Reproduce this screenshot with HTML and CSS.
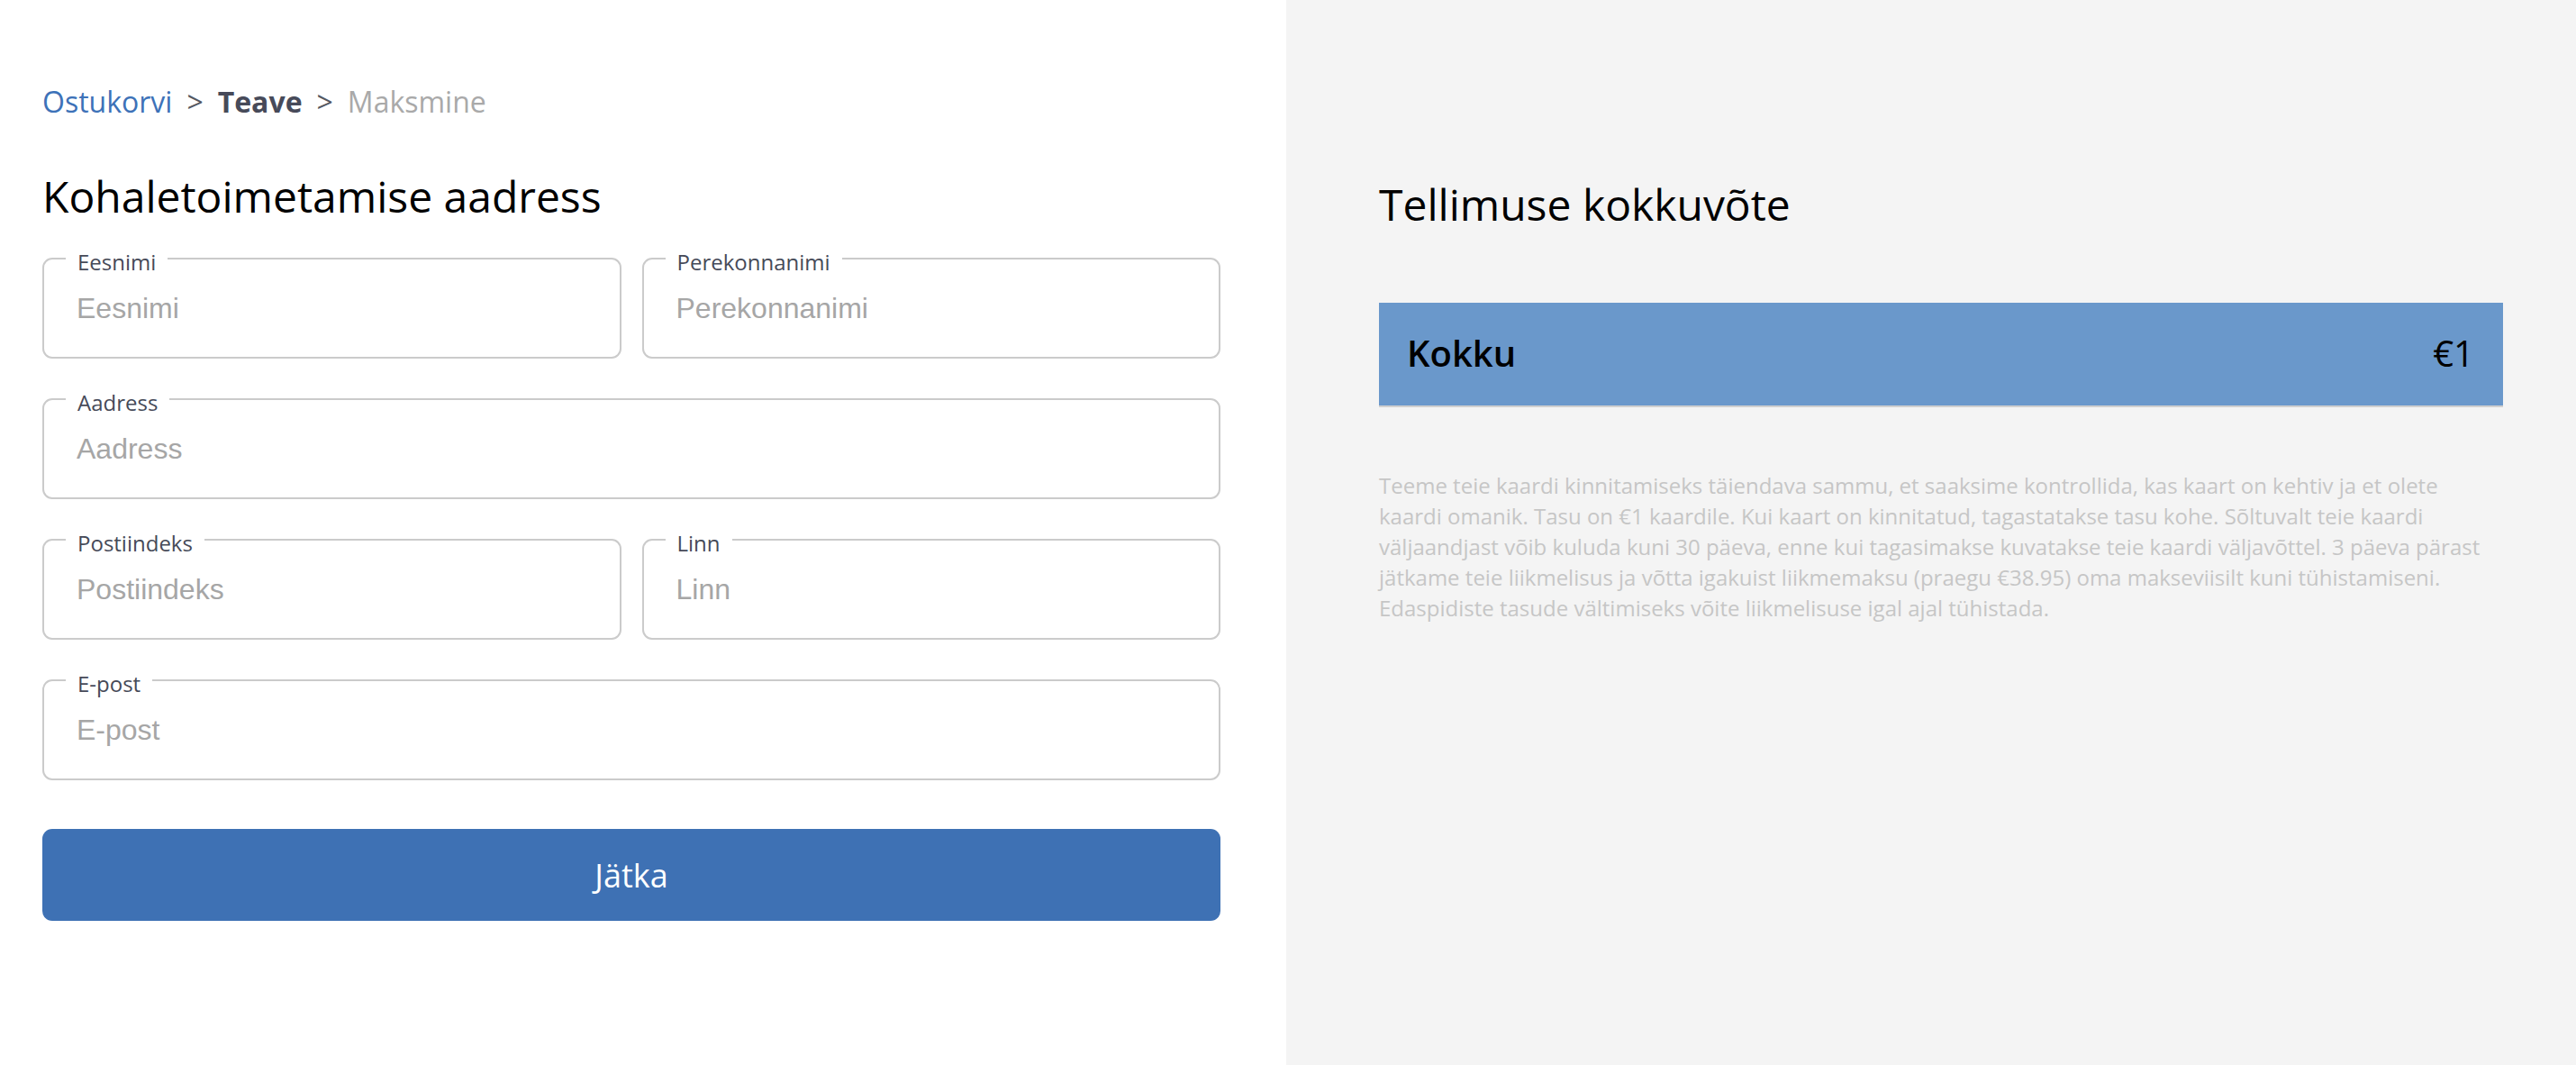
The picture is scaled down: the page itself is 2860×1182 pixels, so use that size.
FILE: index.html
```html
<!DOCTYPE html>
<html lang="et">
<head>
<meta charset="utf-8">
<title>Teave</title>
<link rel="stylesheet" href="styles.css">
</head>
<body>
<div class="page">
  <main class="checkout">
    <nav class="crumbs">
      <span class="crumb crumb-link">Ostukorvi</span>
      <span class="crumb-sep">&gt;</span>
      <span class="crumb crumb-current">Teave</span>
      <span class="crumb-sep">&gt;</span>
      <span class="crumb crumb-next">Maksmine</span>
    </nav>
    <h1 class="section-title">Kohaletoimetamise aadress</h1>
    <form class="address-form">
      <div class="row row-2">
        <div class="field">
          <label class="field-label">Eesnimi</label>
          <input class="field-input" type="text" placeholder="Eesnimi">
        </div>
        <div class="field">
          <label class="field-label">Perekonnanimi</label>
          <input class="field-input" type="text" placeholder="Perekonnanimi">
        </div>
      </div>
      <div class="row">
        <div class="field">
          <label class="field-label">Aadress</label>
          <input class="field-input" type="text" placeholder="Aadress">
        </div>
      </div>
      <div class="row row-2">
        <div class="field">
          <label class="field-label">Postiindeks</label>
          <input class="field-input" type="text" placeholder="Postiindeks">
        </div>
        <div class="field">
          <label class="field-label">Linn</label>
          <input class="field-input" type="text" placeholder="Linn">
        </div>
      </div>
      <div class="row">
        <div class="field">
          <label class="field-label">E-post</label>
          <input class="field-input" type="text" placeholder="E-post">
        </div>
      </div>
      <button class="continue-btn" type="button">Jätka</button>
    </form>
  </main>
  <aside class="summary">
    <h2 class="summary-title">Tellimuse kokkuvõte</h2>
    <div class="total-bar">
      <span class="total-label">Kokku</span>
      <span class="total-value">€1</span>
    </div>
    <p class="summary-note">Teeme teie kaardi kinnitamiseks täiendava sammu, et saaksime kontrollida, kas kaart on kehtiv ja et olete kaardi omanik. Tasu on €1 kaardile. Kui kaart on kinnitatud, tagastatakse tasu kohe. Sõltuvalt teie kaardi väljaandjast võib kuluda kuni 30 päeva, enne kui tagasimakse kuvatakse teie kaardi väljavõttel. 3 päeva pärast jätkame teie liikmelisus ja võtta igakuist liikmemaksu (praegu €38.95) oma makseviisilt kuni tühistamiseni. Edaspidiste tasude vältimiseks võite liikmelisuse igal ajal tühistada.</p>
  </aside>
</div>
</body>
</html>
```

FILE: styles.css
```css
* {
  box-sizing: border-box;
}

html, body {
  margin: 0;
  padding: 0;
  height: 100%;
}

body {
  font-family: "Open Sans", "Noto Sans", sans-serif;
  background: #ffffff;
  color: #000;
}

.page {
  display: flex;
  min-height: 1182px;
}

.checkout {
  width: 1428px;
  flex: none;
  background: #ffffff;
  padding: 91px 73px 0 47px;
}

.crumbs {
  display: flex;
  align-items: baseline;
  gap: 16px;
  font-size: 32px;
  line-height: 44px;
  height: 44px;
}

.crumb-link {
  color: #3d72b8;
}

.crumb-sep {
  color: #555861;
}

.crumb-current {
  color: #474a59;
  font-weight: 700;
}

.crumb-next {
  color: #a9a9a9;
}

.section-title {
  margin: 51px 0 0;
  font-size: 48px;
  line-height: 64px;
  font-weight: 400;
  color: #000;
}

.address-form {
  margin-top: 36px;
  display: flex;
  flex-direction: column;
  width: 1308px;
}

.row {
  display: flex;
  gap: 23px;
  margin-bottom: 44px;
}

.row .field {
  flex: 1 1 0;
}

.field {
  position: relative;
  height: 112px;
  border: 2px solid #cbcbcb;
  border-radius: 11px;
  background: #fff;
}

.field-label {
  position: absolute;
  top: -9px;
  left: 24px;
  padding: 0 13px;
  background: #ffffff;
  font-size: 24px;
  line-height: 24px;
  color: #464a58;
}

.field-input {
  display: block;
  width: 100%;
  height: 100%;
  border: none;
  outline: none;
  background: transparent;
  padding: 0 32px 0 36px;
  font-family: "Liberation Sans", Arial, sans-serif;
  font-size: 32px;
  color: #333;
  border-radius: 11px;
}

.field-input::placeholder {
  color: #a6a6a6;
  opacity: 1;
}

.continue-btn {
  margin-top: 10px;
  height: 102px;
  width: 100%;
  border: none;
  border-radius: 11px;
  background: #3e71b4;
  color: #ffffff;
  font-family: "Open Sans", "Noto Sans", sans-serif;
  font-size: 36px;
  cursor: pointer;
}

.summary {
  flex: 1;
  background: #f4f4f4;
  padding: 195px 81px 0 103px;
}

.summary-title {
  margin: 0;
  font-size: 48px;
  line-height: 64px;
  font-weight: 400;
  color: #000;
}

.total-bar {
  margin-top: 77px;
  height: 116px;
  display: flex;
  align-items: center;
  justify-content: space-between;
  padding: 0 32px 2px 31px;
  background: #6a98cb;
  border-bottom: 2px solid #cfcfcf;
  font-size: 40px;
  line-height: 56px;
  color: #000;
}

.total-label {
  font-weight: 600;
}

.total-value {
  font-weight: 400;
}

.summary-note {
  margin: 70px 0 0;
  font-size: 24px;
  line-height: 34px;
  color: #c6c6c6;
}
```
